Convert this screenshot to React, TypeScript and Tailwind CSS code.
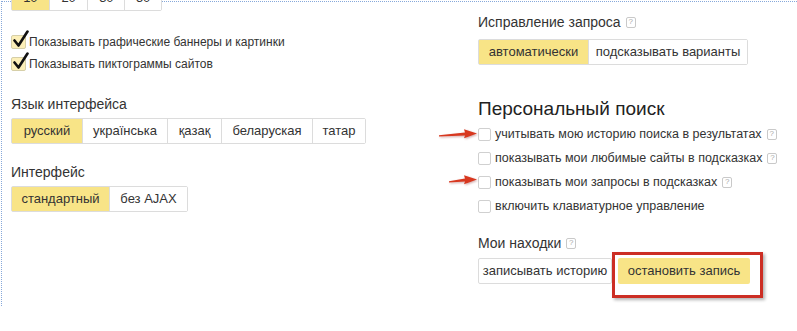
import type { ReactNode } from "react";

const font = { fontFamily: '"Liberation Sans", Arial, sans-serif' };

const Help = () => (
  <span className="ml-[5px] inline-flex h-[11px] w-[10px] items-center justify-center rounded-[2px] border border-[#c9c9c9] text-[8px] leading-none text-[#aaa]">
    ?
  </span>
);

const Segmented = ({
  items,
  active,
  h = "h-[26px]",
}: {
  items: { label: string; w: string }[];
  active: number;
  h?: string;
}) => (
  <div className={`flex ${h} rounded-[2px] border border-[#dcdcdc] text-[13px] text-[#333]`}>
    {items.map((item, i) => (
      <div
        key={item.label}
        className={`flex items-center justify-center ${item.w} ${
          i > 0 ? "border-l border-[#dcdcdc]" : ""
        } ${i === active ? "bg-[#f8e487]" : "bg-white"}`}
      >
        {item.label}
      </div>
    ))}
  </div>
);

const Checked = ({ children }: { children: ReactNode }) => (
  <div className="flex h-[22px] items-center text-[12px] text-[#333]">
    <span className="relative mr-[3px] h-[14px] w-[15px] rounded-[2px] border border-[#d6cfa8] bg-[#fcefb8]">
      <svg className="absolute -top-[6px] left-[1px]" width="16" height="18" viewBox="0 0 16 18">
        <path d="M1.5 10.5 L5.5 15.5 L14.5 1.5" fill="none" stroke="#111" strokeWidth="2.6" strokeLinecap="round" strokeLinejoin="round" />
      </svg>
    </span>
    {children}
  </div>
);

const Unchecked = ({ children, help }: { children: ReactNode; help?: boolean }) => (
  <div className="flex h-[24px] items-center text-[12.5px] text-[#333]">
    <span className="mr-[4px] h-[13px] w-[13px] rounded-[2px] border border-[#d0d0d0] bg-white" />
    {children}
    {help && <Help />}
  </div>
);

const Arrow = ({ w }: { w: number }) => (
  <svg width={w} height="10" viewBox={`0 0 ${w} 10`} className="drop-shadow-[1px_1px_1px_rgba(120,0,0,0.35)]">
    <path d={`M0 6.2 L${w - 12} 3.4 L${w - 13} 0.3 L${w} 4.6 L${w - 13} 9.3 L${w - 12} 6.6 L0 7.4 Z`} fill="#d8381f" />
  </svg>
);

export default function App() {
  return (
    <div className="h-[331px] w-[797px] overflow-hidden bg-white" style={font}>
      <div className="ml-px mt-px flex h-[305px] border-l border-t border-dotted border-[#86a8da]">
        <div className="w-[476px] pl-[9px]">
          <div className="-mt-[17px] w-[151px]">
            <Segmented
              active={0}
              items={[
                { label: "10", w: "w-[37px]" },
                { label: "20", w: "w-[39px]" },
                { label: "30", w: "w-[37px]" },
                { label: "50", w: "w-[37px]" },
              ]}
            />
          </div>
          <div className="mt-[20px]">
            <Checked>Показывать графические баннеры и картинки</Checked>
            <Checked>Показывать пиктограммы сайтов</Checked>
          </div>
          <div className="mt-[19px] h-[20px] text-[14px] leading-[20px] text-[#333]">Язык интерфейса</div>
          <div className="mt-[4px] w-fit">
            <Segmented
              active={0}
              items={[
                { label: "русский", w: "w-[70px]" },
                { label: "українська", w: "w-[85px]" },
                { label: "қазақ", w: "w-[54px]" },
                { label: "беларуская", w: "w-[91px]" },
                { label: "татар", w: "w-[53px]" },
              ]}
            />
          </div>
          <div className="mt-[18px] h-[20px] text-[14px] leading-[20px] text-[#333]">Интерфейс</div>
          <div className="mt-[4px] w-fit">
            <Segmented
              active={0}
              items={[
                { label: "стандартный", w: "w-[97px]" },
                { label: "без AJAX", w: "w-[78px]" },
              ]}
            />
          </div>
        </div>

        <div className="pt-[10px]">
          <div className="flex h-[20px] items-center text-[14px] text-[#333]">
            Исправление запроса
            <Help />
          </div>
          <div className="mt-[7px] w-fit">
            <Segmented
              h="h-[26px]"
              active={0}
              items={[
                { label: "автоматически", w: "w-[109px]" },
                { label: "подсказывать варианты", w: "w-[159px]" },
              ]}
            />
          </div>
          <div className="mt-[31px] h-[26px] text-[19px] leading-[26px] text-[#222]">Персональный поиск</div>
          <div className="relative">
            <div className="absolute left-[-39px] top-[7px]">
              <Arrow w={38} />
            </div>
            <div className="absolute left-[-29px] top-[53px]">
              <Arrow w={28} />
            </div>
            <Unchecked help>учитывать мою историю поиска в результатах</Unchecked>
            <Unchecked help>показывать мои любимые сайты в подсказках</Unchecked>
            <Unchecked help>показывать мои запросы в подсказках</Unchecked>
            <Unchecked>включить клавиатурное управление</Unchecked>
          </div>
          <div className="mt-[15px] flex h-[20px] items-center text-[14px] text-[#333]">
            Мои находки
            <Help />
          </div>
          <div className="mt-[5px] flex items-start text-[13px] text-[#333]">
            <div className="flex h-[26px] w-[134px] items-center justify-center rounded-[2px] border border-[#dcdcdc] bg-white">
              записывать историю
            </div>
            <div className="relative ml-[6px]">
              <div className="flex h-[26px] w-[132px] items-center justify-center rounded-[2px] bg-[#f8e487]">
                остановить запись
              </div>
              <div className="pointer-events-none absolute -left-[6px] -top-[6px] h-[46px] w-[151px] border-[3px] border-[#cc2e24] shadow-[2px_2px_3px_rgba(0,0,0,0.3)]" />
            </div>
          </div>
        </div>
      </div>
    </div>
  );
}
